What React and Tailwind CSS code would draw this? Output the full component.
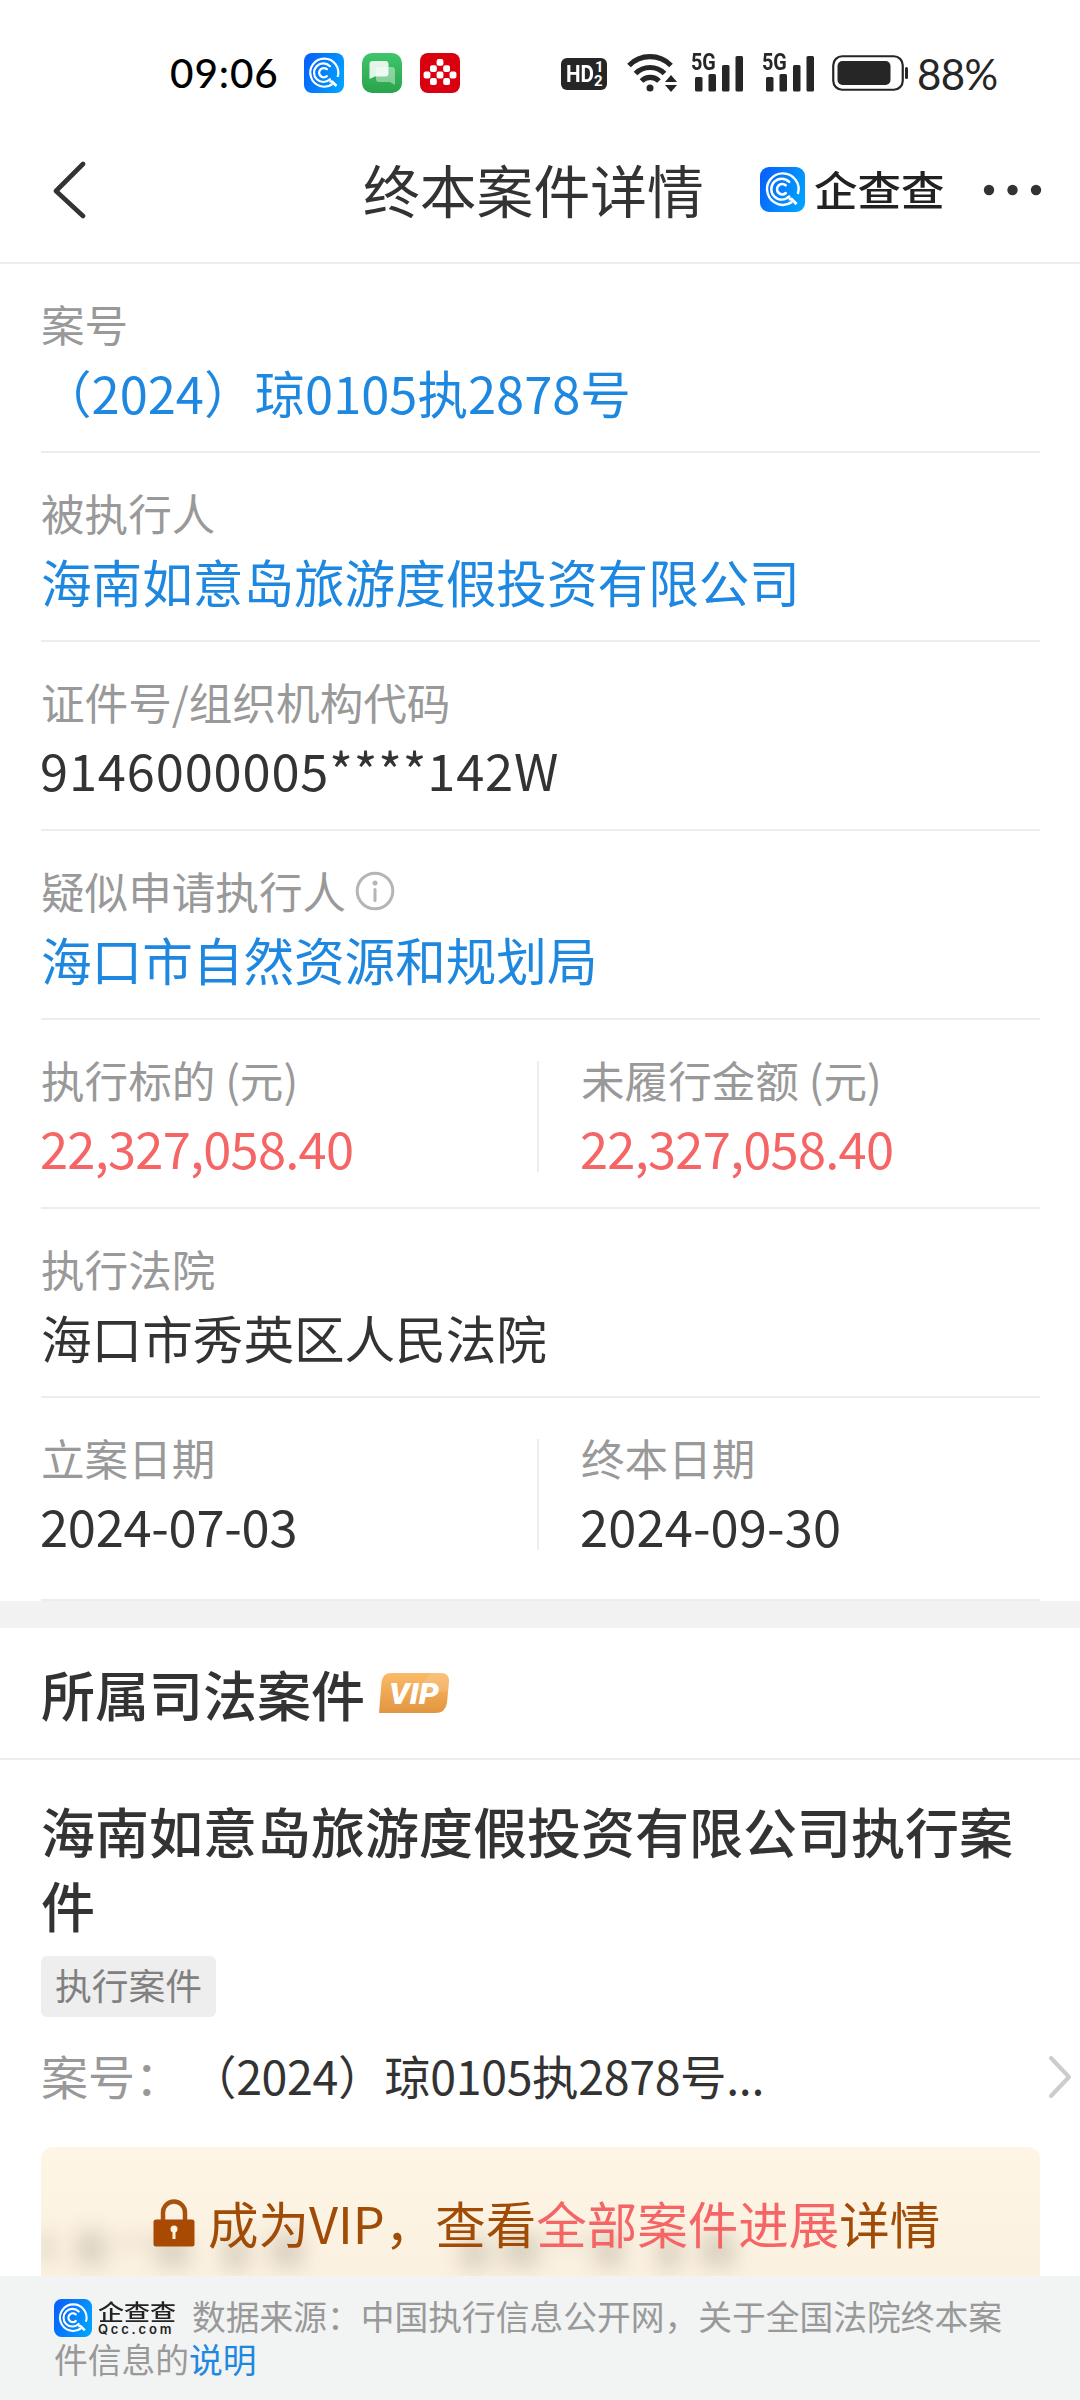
import React from "react";

// brand mark: blue tile with the concentric "Q" rings
const QccIcon = ({ id, className }) => (
  <svg viewBox="0 0 40 40" className={className} aria-hidden="true">
    <defs>
      <linearGradient id={id} x1="0" y1="0.3" x2="1" y2="0.7">
        <stop offset="0" stopColor="#0862fb" />
        <stop offset="1" stopColor="#00a2ff" />
      </linearGradient>
    </defs>
    <rect width="40" height="40" rx="8" fill={`url(#${id})`} />
    <g fill="none" stroke="#fff" strokeWidth="2.2" strokeLinejoin="round">
      <path d="M28.500 31A14 14 0 1 1 33.600 24" />
      <path d="M25.500 28.500l2.500 0 4.500 4.500" strokeWidth="2.600" />
      <path d="M26 13.200A9.300 9.300 0 1 0 26 26.200" strokeLinecap="round" />
      <path d="M22.800 16.200A4.600 4.600 0 1 0 22.800 23.200" strokeWidth="2.400" strokeLinecap="round" />
    </g>
  </svg>
);

const MessageIcon = () => (
  <svg viewBox="0 0 40 40" className="size-10" aria-hidden="true">
    <defs>
      <linearGradient id="msg" x1="0" y1="0" x2="0" y2="1">
        <stop offset="0" stopColor="#3fc56b" />
        <stop offset="1" stopColor="#2aa34c" />
      </linearGradient>
    </defs>
    <rect width="40" height="40" rx="10" fill="url(#msg)" />
    <path d="M17 14h13a3 3 0 0 1 3 3v15l-5-3H17a3 3 0 0 1-3-3v-9a3 3 0 0 1 3-3z" fill="#fff" opacity="0.42" />
    <path d="M10.500 8H23.500a3 3 0 0 1 3 3v9.500a3 3 0 0 1-3 3H13L7.500 26V11a3 3 0 0 1 3-3z" fill="#fff" opacity="0.86" />
  </svg>
);

const dots = [
  [20, 9.3],
  [13.4, 15.6], [26.6, 15.6],
  [7, 22], [20, 22], [33, 22],
  [13.4, 28.5], [26.6, 28.5]
];

const RedIcon = () => (
  <svg viewBox="0 0 40 40" className="size-10" aria-hidden="true">
    <rect width="40" height="40" rx="8" fill="#d9000f" />
    {dots.map(([x, y]) => (
      <rect key={`${x}-${y}`} x={x - 3.4} y={y - 3.4} width="6.800" height="6.800" rx="2" fill="#fff" />
    ))}
  </svg>
);

const Signal = () => (
  <div className="relative h-[38px] w-[52px]">
    <span className="absolute left-0 -top-[1px] origin-left scale-x-[0.86] font-[Roboto] text-[23px] leading-[20px] font-bold">
      5G
    </span>
    <svg viewBox="0 0 52 38" className="h-[38px] w-[52px]" fill="#262626" aria-hidden="true">
      <rect x="4" y="23" width="7.500" height="14.500" rx="1.500" />
      <rect x="17.500" y="20" width="7.500" height="17.500" rx="1.500" />
      <rect x="31" y="11" width="7.500" height="26.500" rx="1.500" />
      <rect x="44.500" y="2" width="7.500" height="35.500" rx="1.500" />
    </svg>
  </div>
);

const StatusBar = () => (
  <div className="flex h-[130px] items-center pt-[16px] pl-[170px] text-[#262626]">
    <span className="w-[134px] font-[Lato] text-[40.500px] leading-[40px] font-medium tracking-[0.900px] text-black">09:06</span>
    <div className="flex gap-[18px]">
      <QccIcon id="qcc-status" className="size-10" />
      <MessageIcon />
      <RedIcon />
    </div>
    <div className="ml-[101px] mt-[2px] flex h-8 w-[46px] items-center rounded-[6px] bg-[#262626] pl-[5px] font-[Roboto] font-bold text-white">
      <span className="w-[27px] origin-left scale-x-[0.86] text-[24px] leading-8">HD</span>
      <span className="flex flex-col pl-[1px] text-[15px] leading-[14px]">
        <span className="pl-[1px]">1</span>
        <span>2</span>
      </span>
    </div>
    <svg viewBox="0 0 50 40" className="ml-5 h-10 w-[50px]" fill="none" stroke="#262626" strokeWidth="5.200" aria-hidden="true">
      <path d="M2 12.500a29.500 29.500 0 0 1 42 0" />
      <path d="M8.500 20.500a20.500 20.500 0 0 1 29 0" />
      <path d="M14.500 28a12.500 12.500 0 0 1 17.500 0" />
      <circle cx="23" cy="35" r="3.500" fill="#262626" stroke="none" />
      <path d="M38 29l6-7 6 7zM38 32l6 7 6-7z" fill="#262626" stroke="none" />
    </svg>
    <div className="ml-[14px] flex gap-[19px]">
      <Signal />
      <Signal />
    </div>
    <svg viewBox="0 0 76 36" className="ml-[18px] h-9 w-[76px]" aria-hidden="true">
      <rect x="1.250" y="1.250" width="69.500" height="33.500" rx="9" fill="none" stroke="#262626" strokeWidth="2.200" />
      <rect x="5.500" y="6" width="53" height="24" rx="5" fill="#262626" />
      <rect x="73" y="12" width="3" height="12" rx="1.500" fill="#262626" />
    </svg>
    <span className="mt-[2px] ml-[9px] font-[Lato] text-[42px] leading-[40px] tracking-[-0.600px]">88%</span>
  </div>
);

const Header = () => (
  <header className="flex h-[134px] items-center border-b-2 border-[#ededed] pb-[13px]">
    <svg viewBox="0 0 34 60" className="ml-[52px] h-[60px] w-[34px]" fill="none" stroke="#333" strokeWidth="4.600" strokeLinecap="round" strokeLinejoin="round" aria-hidden="true">
      <path d="M31 4L4 31l27 25" />
    </svg>
    <h1 className="-mt-[3px] ml-[277px] w-[397px] text-[56.800px] leading-[72px] font-normal">终本案件详情</h1>
    <QccIcon id="qcc-header" className="size-[45px]" />
    <span className="-mt-[2px] ml-[9px] w-[132px] scale-y-[0.93] text-[43.500px] leading-[48px] font-medium text-[#222]">企查查</span>
    <svg viewBox="0 0 60 12" className="ml-[36px] h-3 w-[60px]" fill="#333" aria-hidden="true">
      <circle cx="7" cy="6" r="5.200" />
      <circle cx="30.500" cy="6" r="5.200" />
      <circle cx="54" cy="6" r="5.200" />
    </svg>
  </header>
);

const tones = {
  link: "text-[#1e88e0]",
  dark: "text-[#333]",
  money: "text-[#f56565]"
};

const Field = ({ label, value, tone = "dark", spacing = "", info }) => (
  <div className="w-[496px] shrink-0">
    <div className="flex h-[64px] items-center text-[43.600px] whitespace-nowrap text-[#999]">
      {label}
      {info && (
        <svg viewBox="0 0 40 40" className="mb-[1px] ml-[9px] size-10" fill="none" stroke="#b5b5b5" strokeWidth="3" aria-hidden="true">
          <circle cx="20" cy="20" r="17.800" />
          <path d="M20 18.500v11" strokeLinecap="round" />
          <circle cx="20" cy="12" r="2.500" fill="#b5b5b5" stroke="none" />
        </svg>
      )}
    </div>
    <div className={`h-[72px] text-[50.600px] leading-[72px] whitespace-nowrap ${tones[tone]} ${spacing}`}>{value}</div>
  </div>
);

const Row = ({ children, last }) => (
  <div className={`flex border-b-2 border-[#ededed] pt-[28px] ${last ? "h-[203px]" : "h-[189px]"}`}>{children}</div>
);

const Split = () => <div className="mt-[13px] mr-[42px] h-[111px] w-[2px] shrink-0 bg-[#ededed]" />;

const Details = () => (
  <section className="pr-[40px] pl-[41px]">
    <Row>
      <Field label="案号" value="（2024）琼0105执2878号" tone="link" />
    </Row>
    <Row>
      <Field label="被执行人" value="海南如意岛旅游度假投资有限公司" tone="link" />
    </Row>
    <Row>
      <Field label="证件号/组织机构代码" value="9146000005****142W" spacing="-mt-[1px] -ml-[1px] tracking-[0.850px]" />
    </Row>
    <Row>
      <Field label="疑似申请执行人" value="海口市自然资源和规划局" tone="link" info />
    </Row>
    <Row>
      <Field label="执行标的 (元)" value="22,327,058.40" tone="money" spacing="-mt-[1px] -ml-[1px] tracking-[-0.750px]" />
      <Split />
      <Field label="未履行金额 (元)" value="22,327,058.40" tone="money" spacing="-mt-[1px] -ml-[1px] tracking-[-0.750px]" />
    </Row>
    <Row>
      <Field label="执行法院" value="海口市秀英区人民法院" />
    </Row>
    <Row last>
      <Field label="立案日期" value="2024-07-03" spacing="-mt-[1px] -ml-[1px] tracking-[-0.250px]" />
      <Split />
      <Field label="终本日期" value="2024-09-30" spacing="-mt-[1px] -ml-[1px] tracking-[0.150px]" />
    </Row>
  </section>
);

const VipBadge = () => (
  <svg viewBox="0 0 70 40" className="mb-[3px] ml-[14px] h-10 w-[70px]" aria-hidden="true">
    <defs>
      <linearGradient id="vip" x1="0" y1="0" x2="0" y2="1">
        <stop offset="0" stopColor="#fbba68" />
        <stop offset="1" stopColor="#e2953f" />
      </linearGradient>
    </defs>
    <path d="M12 0H62q8 0 8 8L68 30q-1.500 10-12 10H0L2.500 9Q4 0 12 0z" fill="url(#vip)" />
    <path d="M52 0h10q8 0 8 8l-1 11L36 18z" fill="#fff" opacity="0.12" />
    <text x="35" y="30.500" textAnchor="middle" textLength="50" lengthAdjust="spacingAndGlyphs" className="fill-white font-[Roboto] text-[30px] font-black italic">
      VIP
    </text>
  </svg>
);

const CaseSection = () => (
  <section>
    <div className="flex h-[132px] items-center border-b-2 border-[#ededed] pt-[2px] pl-[41px]">
      <h2 className="text-[54px] leading-[72px] font-medium">所属司法案件</h2>
      <VipBadge />
    </div>
    <div className="px-[41px] pt-[34px]">
      <h3 className="text-[54px] leading-[74px] font-medium">海南如意岛旅游度假投资有限公司执行案件</h3>
      <span className="mt-[14px] flex h-[61px] w-[175px] items-center justify-center rounded-[6px] bg-[#eee] pb-[3px] text-[36.800px] text-[#808080]">
        执行案件
      </span>
    </div>
    <div className="mt-[23px] flex h-[74px] items-center pl-[41px] text-[47px] leading-[74px]">
      <span className="-mt-[4px] w-[149px] text-[#999]">案号：</span>
      <span className="-mt-[4px] flex-1 text-[46.500px] tracking-[-0.350px]">（2024）琼0105执2878号...</span>
      <svg viewBox="0 0 24 44" className="mr-[8px] h-11 w-6" fill="none" stroke="#ccc" strokeWidth="4" strokeLinecap="round" strokeLinejoin="round" aria-hidden="true">
        <path d="M3 3l18 19L3 41" />
      </svg>
    </div>
  </section>
);

// hidden case progress that shows through the paywall: [x, y, width, height]
const smudges = [
  [0, 86, 12, 28], [36, 84, 28, 34], [74, 92, 40, 6], [116, 88, 32, 32], [182, 90, 26, 32], [230, 86, 32, 34],
  [420, 90, 28, 32], [462, 86, 36, 34], [508, 92, 38, 6], [554, 86, 28, 34], [616, 90, 24, 32], [660, 86, 34, 34]
];

const VipBanner = () => (
  <div className="relative mr-[40px] ml-[41px] mt-[33px] flex h-[129px] items-center overflow-hidden rounded-t-[12px] bg-linear-to-b from-[#fff5e5] to-[#fbf1e1] pt-[23px] pl-[112px] text-[50.500px] text-[#a04b06]">
    <svg viewBox="0 0 999 129" className="absolute inset-0 h-[129px] w-[999px] opacity-22 blur-[10px]" fill="#6b6250" aria-hidden="true">
      {smudges.map(([x, y, w, h]) => (
        <rect key={x} x={x} y={y} width={w} height={h} />
      ))}
    </svg>
    <svg viewBox="0 0 42 48" className="relative mr-[13px] h-12 w-[42px]" aria-hidden="true">
      <path d="M10 22v-8.500a11 11 0 0 1 22 0V22" fill="none" stroke="#a8520f" strokeWidth="4.500" />
      <rect x="0.500" y="20.500" width="41" height="27" rx="2.500" fill="#a94a02" />
      <circle cx="21" cy="30" r="3.500" fill="#fdf2e0" />
      <path d="M19.500 31h3v9h-3z" fill="#fdf2e0" />
    </svg>
    <span className="relative whitespace-nowrap">
      成为VIP，查看<span className="text-[#f56565]">全部案件进展</span>详情
    </span>
  </div>
);

const Footer = () => (
  <footer className="h-[124px] bg-[#f2f3f3] px-[54px] pt-[18px] text-[33.750px] leading-[43px] text-[#999]">
    <span className="mr-[16px] inline-flex h-[43px] items-center gap-[6px] pt-[5px] align-top">
      <QccIcon id="qcc-footer" className="size-[38px]" />
      <span className="flex flex-col text-[#222]">
        <span className="h-[23px] origin-top scale-y-[0.84] text-[26px] leading-[25px] font-medium">企查查</span>
        <span className="font-[Inter] text-[13px] leading-[13px] font-semibold tracking-[2.800px]">Qcc.com</span>
      </span>
    </span>
    数据来源：中国执行信息公开网，关于全国法院终本案件信息的<a className="text-[#1e88e0]">说明</a>
  </footer>
);

const App = () => (
  <div className="flex h-[2400px] w-[1080px] flex-col overflow-hidden bg-white font-['Noto_Sans_CJK_SC',sans-serif] text-[#333]">
    <StatusBar />
    <Header />
    <Details />
    <div className="h-[27px] bg-[#f2f2f2]" />
    <CaseSection />
    <VipBanner />
    <Footer />
  </div>
);

export default App;
